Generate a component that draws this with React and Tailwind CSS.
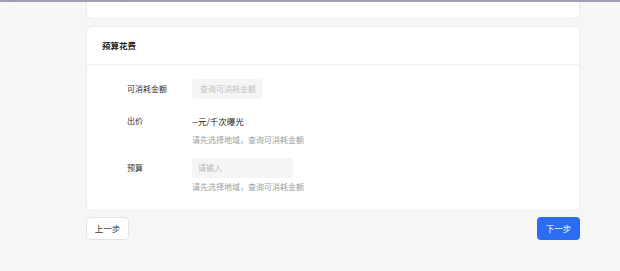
import React from 'react';

const font = { fontFamily: '"Noto Sans CJK SC", "Noto Sans", sans-serif' };

function FormRow({ label, children, help }) {
  return (
    <div className="flex">
      <div className="w-[65px] shrink-0 h-[20px] flex items-center text-[8px] text-[#333]">{label}</div>
      <div className="flex flex-col">
        {children}
        {help && <div className="mt-[3px] h-[12px] leading-[12px] text-[8px] text-[#a0a0a0]">{help}</div>}
      </div>
    </div>
  );
}

export default function App() {
  return (
    <div className="w-[620px] h-[271px] bg-[#f6f6f6] overflow-hidden" style={font}>
      {/* top scroll bar strip */}
      <div className="h-[2px] bg-[#9ea1b4] flex">
        <div className="w-[12px]" />
        <div className="w-[1px] bg-[#8e91a3]" />
        <div className="w-[111px]" />
        <div className="w-[1px] bg-[#8e91a3]" />
      </div>

      <div className="pl-[86px] pr-[40px] flex flex-col">
        {/* previous card, mostly scrolled away */}
        <div className="h-[17px] bg-white rounded-b-[6px] border border-t-0 border-[#ededed]" />

        <div className="mt-[7px] bg-white rounded-[6px] border border-[#ededed]">
          <div className="h-[38px] border-b border-[#f0f0f0] flex items-center pl-[15px] text-[8.5px] font-semibold text-[#222]">
            预算花费
          </div>
          <div className="pt-[14px] pb-[17px] pl-[40px] flex flex-col gap-[12px]">
            <FormRow label="可消耗金额">
              <div className="w-[70px] h-[20px] rounded-[3px] bg-[#f5f5f5] flex items-center pl-[8px] text-[8px] text-[#c4c4c4]">
                查询可消耗金额
              </div>
            </FormRow>
            <FormRow label="出价" help="请先选择地域，查询可消耗金额">
              <div className="h-[20px] flex items-center text-[8.5px] text-[#222]">--元/千次曝光</div>
            </FormRow>
            <FormRow label="预算" help="请先选择地域，查询可消耗金额">
              <div className="w-[101px] h-[20px] rounded-[3px] bg-[#f5f5f5] flex items-center pl-[6px] text-[8px] text-[#b8b8b8]">
                请输入
              </div>
            </FormRow>
          </div>
        </div>

        <div className="mt-[6px] flex justify-between">
          <button className="w-[43px] h-[23px] bg-white border border-[#e3e3e3] rounded-[4px] text-[8.5px] text-[#333] flex items-center justify-center">
            上一步
          </button>
          <button className="w-[43px] h-[23px] bg-[#2b6cf2] rounded-[4px] text-[8.5px] text-white flex items-center justify-center">
            下一步
          </button>
        </div>
      </div>
    </div>
  );
}
